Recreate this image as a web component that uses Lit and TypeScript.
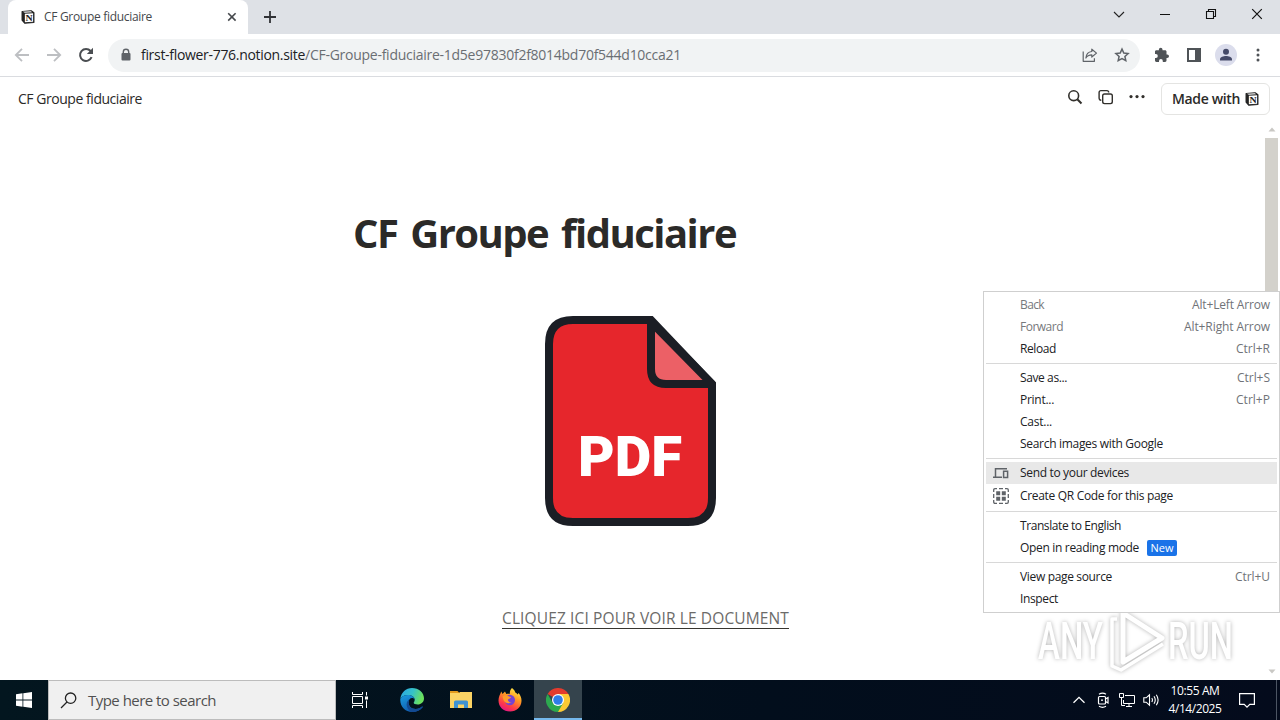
import { LitElement, html, css, nothing } from 'lit';
import { customElement, property } from 'lit/decorators.js';
import { classMap } from 'lit/directives/class-map.js';

interface MenuItem {
  label: string;
  width: number;
  keys?: string;
  keysWidth?: number;
  disabled?: boolean;
  active?: boolean;
  icon?: 'devices' | 'qr';
  badge?: string;
}

const MENU: MenuItem[][] = [
  [
    { label: 'Back', width: 24, keys: 'Alt+Left Arrow', keysWidth: 78, disabled: true },
    { label: 'Forward', width: 43, keys: 'Alt+Right Arrow', keysWidth: 86, disabled: true },
    { label: 'Reload', width: 36, keys: 'Ctrl+R', keysWidth: 34 },
  ],
  [
    { label: 'Save as...', width: 47, keys: 'Ctrl+S', keysWidth: 33 },
    { label: 'Print...', width: 34, keys: 'Ctrl+P', keysWidth: 34 },
    { label: 'Cast...', width: 32 },
    { label: 'Search images with Google', width: 143 },
  ],
  [
    { label: 'Send to your devices', width: 109, icon: 'devices', active: true },
    { label: 'Create QR Code for this page', width: 153, icon: 'qr' },
  ],
  [
    { label: 'Translate to English', width: 101 },
    { label: 'Open in reading mode', width: 119, badge: 'New' },
  ],
  [
    { label: 'View page source', width: 92, keys: 'Ctrl+U', keysWidth: 35 },
    { label: 'Inspect', width: 38 },
  ],
];

const notionIcon = (size: number) => html`
  <svg width=${size} height=${size} viewBox="0 0 16 16">
    <path d="M1.2 1.6 11.6.9l3.2 2.3v11L4.2 15.1 1.2 11.6z" fill="#222" stroke="#222" stroke-width="1.2" stroke-linejoin="round" />
    <path d="M4.4 4.3 13.8 3.7v9.7l-9.4.7z" fill="#fff" />
    <path d="M2.2 2.1 11.2 1.5l1.6 1.2-8.4.5z" fill="#fff" />
    <text x="5" y="12.6" textLength="8.2" lengthAdjust="spacingAndGlyphs" font-family="Liberation Serif, serif" font-weight="700" font-size="10.5" fill="#222">N</text>
  </svg>
`;

// Line of text whose tracking is adjusted to fill the given width
@customElement('fit-text')
class FitText extends LitElement {
  @property({ type: Number }) width = 0;
  @property() text = '';

  static styles = css`
    :host {
      display: inline-block;
      white-space: pre;
      flex: none;
    }
  `;

  updated() {
    const span = this.renderRoot.querySelector('span')!;
    span.style.letterSpacing = '0px';
    const natural = span.getBoundingClientRect().width;
    span.style.letterSpacing = `${(this.width - natural) / this.text.length}px`;
  }

  render() {
    return html`<span>${this.text}</span>`;
  }
}

@customElement('context-menu')
class ContextMenu extends LitElement {
  static styles = css`
    :host {
      display: block;
      box-sizing: border-box;
      width: 297px;
      height: 322px;
      padding: 2px;
      background: #fff;
      border: 1px solid #cfcfcf;
      font-size: 12px;
      color: #202124;
    }
    .group + .group {
      border-top: 1px solid #d8d8d8;
      margin-top: 3px;
      padding-top: 3px;
    }
    .item {
      display: flex;
      align-items: center;
      height: 22px;
      padding: 0 7px 0 34px;
    }
    .item fit-text {
      padding-bottom: 2px;
    }
    .item.qr {
      height: 24px;
    }
    .item.active {
      background: #e8e8e8;
    }
    .disabled {
      color: #77797c;
    }
    .keys {
      margin-left: auto;
      color: #707378;
    }
    svg {
      width: 16px;
      height: 16px;
      margin: 0 11px 0 -27px;
    }
    .badge {
      display: flex;
      align-items: center;
      justify-content: center;
      width: 30px;
      height: 16px;
      margin-left: 8px;
      border-radius: 2px;
      background: #1a73e8;
      color: #fff;
      font-size: 11px;
    }
    .badge fit-text {
      padding-bottom: 1px;
    }
  `;

  _icon(name: string) {
    return name === 'devices'
      ? html`<svg viewBox="0 0 16 16" fill="none" stroke="#5f6368" stroke-width="1.5">
          <path d="M2.5 12V3.8H14M0 12.3h9M10.6 6.2h4v6.3h-4z" />
        </svg>`
      : html`<svg viewBox="0 0 16 16" fill="#5f6368">
          <path d="M.7 4V2Q.7.7 2 .7h2M12 .7h2Q15.3.7 15.3 2v2M15.3 12v2q0 1.3-1.3 1.3h-2M4 15.3H2Q.7 15.3.7 14v-2M.7 6v4M15.3 6v4M6 .7h4M6 15.3h4" fill="none" stroke="#5f6368" stroke-width="1.3" />
          <path d="M3.2 3.2h4v4h-4zM8.8 3.2h4v4h-4zM3.2 8.8h4v4h-4zM8.8 8.8h4v4h-4z" />
        </svg>`;
  }

  render() {
    return html`${MENU.map(group => html`
      <div class="group">
        ${group.map(item => html`
          <div class=${classMap({ item: true, active: !!item.active, disabled: !!item.disabled, qr: item.icon === 'qr' })}>
            ${item.icon ? this._icon(item.icon) : nothing}
            <fit-text .width=${item.width} .text=${item.label}></fit-text>
            ${item.badge ? html`<span class="badge"><fit-text .width=${23} .text=${item.badge}></fit-text></span>` : nothing}
            ${item.keys ? html`<fit-text class="keys" .width=${item.keysWidth!} .text=${item.keys}></fit-text>` : nothing}
          </div>
        `)}
      </div>
    `)}`;
  }
}

@customElement('browser-chrome')
class BrowserChrome extends LitElement {
  static styles = css`
    :host {
      display: block;
      height: 77px;
      box-sizing: border-box;
      border-bottom: 1px solid #dadce0;
      background: #fff;
    }
    svg {
      display: block;
      flex: none;
    }
    .tabs {
      display: flex;
      height: 34px;
      background: #dee1e6;
      padding-left: 8px;
    }
    .tab {
      box-sizing: border-box;
      width: 240px;
      display: flex;
      align-items: center;
      padding: 0 11px 0 13px;
      background: #fff;
      border-radius: 8px 8px 0 0;
      font-size: 12px;
      color: #45484c;
    }
    .tab fit-text {
      margin: 0 auto 0 9px;
      padding-bottom: 2px;
    }
    .plus {
      margin: 10px 0 0 15px;
    }
    .window {
      display: flex;
      align-items: center;
      gap: 34px;
      margin: 0 17px 6px auto;
    }
    .toolbar {
      display: flex;
      align-items: center;
      height: 42px;
      padding: 0 14px;
    }
    .nav {
      display: flex;
      gap: 16px;
      margin-right: 14px;
    }
    .omnibox {
      box-sizing: border-box;
      display: flex;
      align-items: center;
      width: 1032px;
      height: 33px;
      padding: 0 10px 0 12px;
      border-radius: 17px;
      background: #f1f3f4;
      font-size: 14px;
      color: #202124;
    }
    .omnibox fit-text {
      padding-bottom: 2px;
    }
    .omnibox .host {
      margin-left: 9px;
    }
    .path {
      color: #6a6e73;
      margin-right: auto;
    }
    .actions {
      display: flex;
      gap: 16px;
    }
    .ext {
      display: flex;
      align-items: center;
      gap: 16px;
      margin-left: 14px;
    }
    .avatar {
      width: 22px;
      height: 22px;
      margin: 0 -3px;
    }
  `;

  render() {
    return html`
      <div class="tabs">
        <div class="tab">
          ${notionIcon(14)}
          <fit-text .width=${108} .text=${'CF Groupe fiduciaire'}></fit-text>
          <svg width="10" height="10" viewBox="0 0 10 10" stroke="#45484c" stroke-width="1.6"><path d="M1.2 1.2l7.4 7.4M8.6 1.2 1.2 8.6" /></svg>
        </div>
        <svg class="plus" width="14" height="14" viewBox="0 0 14 14" stroke="#303236" stroke-width="1.8"><path d="M7 1v12M1 7h12" /></svg>
        <div class="window">
          <svg width="12" height="12" viewBox="0 0 12 12" fill="none" stroke="#222" stroke-width="1.1"><path d="M1 4l5 5 5-5" /></svg>
          <svg width="12" height="12" viewBox="0 0 12 12" fill="none" stroke="#111"><path d="M1 6.5h10" /></svg>
          <svg width="12" height="12" viewBox="0 0 12 12" fill="none" stroke="#111" stroke-width="1.1"><path d="M1.5 3.5h7v7h-7zM3.5 3.5v-2h7v7h-2" /></svg>
          <svg width="12" height="12" viewBox="0 0 12 12" fill="none" stroke="#111" stroke-width="1.2"><path d="M1.2 1.2l9.6 9.6M10.8 1.2l-9.6 9.6" /></svg>
        </div>
      </div>
      <div class="toolbar">
        <div class="nav">
          <svg width="16" height="16" viewBox="0 0 16 16" fill="none" stroke="#bdbfc2" stroke-width="1.8"><path d="M15 8H2M8 1.8 1.8 8 8 14.2" /></svg>
          <svg width="16" height="16" viewBox="0 0 16 16" fill="none" stroke="#bdbfc2" stroke-width="1.8"><path d="M1 8h13M8 1.8 14.2 8 8 14.2" /></svg>
          <svg width="16" height="16" viewBox="0 0 16 16"><path d="M13.6 10.2A6 6 0 1 1 12.6 4L13.6 5" fill="none" stroke="#4a4d51" stroke-width="2" /><path d="M15 .8v6.2H8.8z" fill="#4a4d51" /></svg>
        </div>
        <div class="omnibox">
          <svg width="12" height="14" viewBox="0 0 12 14"><path d="M3.3 6V4a2.7 2.7 0 0 1 5.4 0v2" fill="none" stroke="#5f6368" stroke-width="1.4" /><rect x="1.5" y="5" width="9" height="7.6" rx="1" fill="#5f6368" /></svg>
          <fit-text class="host" .width=${164} .text=${'first-flower-776.notion.site'}></fit-text>
          <fit-text class="path" .width=${376} .text=${'/CF-Groupe-fiduciaire-1d5e97830f2f8014bd70f544d10cca21'}></fit-text>
          <div class="actions">
            <svg width="16" height="16" viewBox="0 0 16 16" fill="none" stroke="#5f6368" stroke-width="1.2"><path d="M1.2 4.5v9.8h11.2v-3M9.8 2.2l4.7 3.9-4.7 3.9V7.8C7 7.8 5 8.8 3.9 11 4.2 7.4 6 4.9 9.8 4.5z" stroke-linejoin="round" /></svg>
            <svg width="16" height="16" viewBox="0 0 16 16" fill="none" stroke="#5f6368" stroke-width="1.5"><path d="M8 2.1l1.8 3.9 4.3.5-3.2 2.9.9 4.2L8 11.5l-3.8 2.1.9-4.2L1.9 6.5l4.3-.5z" /></svg>
          </div>
        </div>
        <div class="ext">
          <svg width="16" height="16" viewBox="0 0 16 16" fill="#4f5357"><path d="M13.2 7.4h-.7V4.6c0-.8-.6-1.4-1.4-1.4H8.5v-.6a1.8 1.8 0 0 0-3.6 0v.6H2.4C1.6 3.2 1 3.8 1 4.6v2.5h.9a1.9 1.9 0 0 1 0 3.8H1v2.6c0 .8.6 1.4 1.4 1.4H5V14a1.9 1.9 0 0 1 3.8 0v.9h2.3c.8 0 1.4-.6 1.4-1.4V11h.7a1.8 1.8 0 0 0 0-3.6z" /></svg>
          <svg width="16" height="16" viewBox="0 0 16 16"><path d="M1 1h14v14H1zM3 3v10h6V3z" fill="#4f5357" fill-rule="evenodd" /></svg>
          <svg class="avatar" viewBox="0 0 22 22"><circle cx="11" cy="11" r="11" fill="#dbddec" /><circle cx="11" cy="7.8" r="3" fill="#454a68" /><path d="M5 16.5v-1.2c0-2 3.5-3.2 6-3.2s6 1.2 6 3.2v1.2z" fill="#454a68" /></svg>
          <svg width="16" height="16" viewBox="0 0 16 16" fill="#4f5357"><circle cx="8" cy="3" r="1.5" /><circle cx="8" cy="8" r="1.5" /><circle cx="8" cy="13" r="1.5" /></svg>
        </div>
      </div>
    `;
  }
}

@customElement('notion-page')
class NotionPage extends LitElement {
  static styles = css`
    :host {
      display: block;
      height: 603px;
      position: relative;
      overflow: hidden;
      background: #fff;
      color: #2b2a28;
    }
    svg {
      display: block;
      flex: none;
    }
    header {
      box-sizing: border-box;
      display: flex;
      align-items: center;
      height: 44px;
      padding: 0 10px 0 18px;
      font-size: 14px;
    }
    header fit-text {
      padding-bottom: 2px;
    }
    .tools {
      display: flex;
      gap: 15px;
      margin: 0 16px 4px auto;
    }
    .made {
      box-sizing: border-box;
      display: flex;
      align-items: center;
      gap: 5px;
      width: 109px;
      height: 32px;
      padding-left: 10px;
      border: 1px solid #e4e4e2;
      border-radius: 6px;
      font-weight: 600;
    }
    .body {
      display: flex;
      height: 559px;
    }
    main {
      flex: 1;
      padding: 82px 0 0 353px;
    }
    h1 {
      margin: 0;
      font-size: 40px;
      line-height: 60px;
      font-weight: 700;
      word-spacing: 4px;
    }
    .pdf {
      margin: 52px 0 0 191px;
    }
    .link {
      display: inline-block;
      margin: 81px 0 0 149px;
      height: 20px;
      line-height: 20px;
      border-bottom: 1px solid #37352f;
      font-size: 15.5px;
      font-weight: 500;
      color: #6c6b69;
    }
    .scroll {
      display: flex;
      flex-direction: column;
      align-items: center;
      width: 17px;
      padding: 6px 0;
      box-sizing: border-box;
    }
    .thumb {
      width: 13px;
      height: 400px;
      margin: 6px 0 auto;
      background: #d3d1cb;
    }
    .watermark {
      position: absolute;
      left: 1034px;
      top: 528px;
      overflow: visible;
      filter: drop-shadow(0 0 2px rgba(0, 0, 0, 0.3));
    }
    context-menu {
      position: absolute;
      left: 983px;
      top: 214px;
    }
  `;

  render() {
    return html`
      <header>
        <fit-text .width=${124} .text=${'CF Groupe fiduciaire'}></fit-text>
        <div class="tools">
          <svg width="16" height="16" viewBox="0 0 16 16" fill="none" stroke="#32302c" stroke-width="1.6"><circle cx="6.7" cy="6.7" r="4.9" /><path d="M10.3 10.3l4.2 4.2" stroke-width="2" /></svg>
          <svg width="16" height="16" viewBox="0 0 16 16" fill="none" stroke="#32302c" stroke-width="1.4"><rect x="4.7" y="5" width="9.6" height="9.6" rx="1.8" /><path d="M3.3 11.2h-.4A1.9 1.9 0 0 1 1.1 9.3V3.5c0-1 .8-1.9 1.8-1.9h6c1 0 1.8.8 1.8 1.8" /></svg>
          <svg width="16" height="16" viewBox="0 0 16 16" fill="#32302c"><circle cx="2" cy="7.6" r="1.6" /><circle cx="8" cy="7.6" r="1.6" /><circle cx="14" cy="7.6" r="1.6" /></svg>
        </div>
        <div class="made"><fit-text .width=${68} .text=${'Made with'}></fit-text>${notionIcon(14)}</div>
      </header>
      <div class="body">
        <main>
          <h1><fit-text .width=${383} .text=${'CF Groupe fiduciaire'}></fit-text></h1>
          <svg class="pdf" width="172" height="212" viewBox="0 0 172 212">
            <path d="M29 5h78L168 69v114q0 24-24 24H29q-24 0-24-24V29Q5 5 29 5z" fill="#e6262c" stroke="#1b1e25" stroke-width="8" />
            <path d="M107 7v47q0 15 15 15h46z" fill="#ec6066" stroke="#1b1e25" stroke-width="8" stroke-linejoin="round" />
            <text x="34" y="161" textLength="104" lengthAdjust="spacingAndGlyphs" font-family="Roboto, sans-serif" font-weight="900" font-size="56" fill="#fff">PDF</text>
          </svg>
          <div class="link"><fit-text .width=${287} .text=${'CLIQUEZ ICI POUR VOIR LE DOCUMENT'}></fit-text></div>
        </main>
        <div class="scroll">
          <svg width="8" height="5" viewBox="0 0 8 5"><path d="M.5 4.5 4 .5l3.5 4z" fill="#c9c8c4" /></svg>
          <div class="thumb"></div>
          <svg width="8" height="5" viewBox="0 0 8 5"><path d="M.5.5 4 4.5 7.5.5z" fill="#c9c8c4" /></svg>
        </div>
      </div>
      <svg class="watermark" width="210" height="74" viewBox="0 0 210 74" fill="#fff">
        <g font-family="Roboto, sans-serif" font-weight="500" font-size="51">
          <text x="4" y="54" textLength="65" lengthAdjust="spacingAndGlyphs">ANY</text>
          <text x="134" y="54" textLength="65" lengthAdjust="spacingAndGlyphs">RUN</text>
        </g>
        <g fill="none" stroke="#fff" stroke-linejoin="round">
          <path d="M89 8 128 33 89 57z" stroke-width="5" />
          <path d="M83 14h-5v47l9 4 42-26" stroke-width="3.5" />
        </g>
      </svg>
      <context-menu></context-menu>
    `;
  }
}

@customElement('task-bar')
class TaskBar extends LitElement {
  static styles = css`
    :host {
      display: flex;
      height: 40px;
      background: linear-gradient(90deg, #03161f, #020e1c 60%, #040b1c);
      color: #fff;
    }
    svg {
      display: block;
      flex: none;
    }
    .start {
      width: 48px;
      display: grid;
      place-items: center;
    }
    .search {
      box-sizing: border-box;
      display: flex;
      align-items: center;
      gap: 11px;
      width: 288px;
      padding-left: 11px;
      border: 1px solid #bcbcbc;
      background: #f0f0f0;
      font-size: 15px;
      color: #505050;
    }
    .app {
      box-sizing: border-box;
      width: 49px;
      display: grid;
      place-items: center;
    }
    .app.tasks {
      width: 48px;
      margin-right: 3px;
    }
    .app.current {
      width: 48px;
      background: #35444d;
      border-bottom: 2px solid #76b9ed;
      padding-top: 2px;
    }
    .tray {
      display: flex;
      align-items: center;
      gap: 8px;
      margin-left: auto;
    }
    .clock {
      display: flex;
      flex-direction: column;
      align-items: center;
      width: 54px;
      font-size: 12px;
      line-height: 18px;
    }
    .note {
      margin: 0 12px 0 8px;
    }
    .peek {
      width: 4px;
      height: 40px;
      box-sizing: border-box;
      border-left: 1px solid #4c5563;
    }
  `;

  render() {
    return html`
      <div class="start">
        <svg width="16" height="16" viewBox="0 0 16 16" fill="#fff"><path d="M0 2.2 6.5 1.3v6.3H0zM7.3 1.2 16 0v7.6H7.3zM0 8.4h6.5v6.3L0 13.8zM7.3 8.4H16V16l-8.7-1.2z" /></svg>
      </div>
      <div class="search">
        <svg width="17" height="17" viewBox="0 0 17 17" fill="none" stroke="#222" stroke-width="1.3"><circle cx="10.6" cy="6.2" r="5.2" /><path d="M7 10l-6 6" /></svg>
        <fit-text .width=${128} .text=${'Type here to search'}></fit-text>
      </div>
      <div class="app tasks">
        <svg width="16" height="16" viewBox="0 0 16 16" fill="none" stroke="#fff"><path d="M.5 0v2.5h10V0M.5 4.5h10v7H.5zM.5 16v-2.5h10V16M14.5 0v3.500M14.5 8.5V16" /><path d="M13 4.5h3v3h-3z" fill="#fff" stroke="none" /></svg>
      </div>
      <div class="app">
        <svg width="24" height="24" viewBox="0 0 24 24">
          <defs>
            <linearGradient id="sea" x1="0" y1="0" x2="1" y2=".3"><stop offset="0" stop-color="#2aa6e6" /><stop offset=".55" stop-color="#35c1c9" /><stop offset="1" stop-color="#6be05d" /></linearGradient>
            <linearGradient id="deep" x1="0" y1="0" x2=".6" y2="1"><stop offset="0" stop-color="#1a9de0" /><stop offset="1" stop-color="#0f55a8" /></linearGradient>
          </defs>
          <path d="M.3 11C1 4.5 6 0 12 0c6.8 0 12 4.8 12 10.2 0 3.9-3 6.3-6.3 6.3-2.4 0-4-.8-4-1.7 0-.8 1-1.2 1-3C14.7 9 11.5 7 8 7 4 7 1.3 8.7.3 11z" fill="url(#sea)" />
          <path d="M.3 11C1.3 8.7 4 7 8 7c3.5 0 6.5 2 6.7 4.5-.4-1-1.5-1.5-2.6-1.5-2 0-3.6 2-3.6 4.6 0 3.7 3.2 6.5 7 6.5 3 0 4.9-1 6.6-2.5.4-.2.8.2.5.6C20.5 22.2 16.5 24 12 24 5 24-.2 18 .3 11z" fill="url(#deep)" />
          <path d="M8.5 14.6c0-1.5.5-2.8 1.3-3.6-3.8 2-5 8.5 1 12.9 4.5.5 9.3-1 11.8-4.7.2-.4-.2-.8-.6-.6-1.6 1.5-3.6 2.5-6.5 2.5-3.8 0-7-2.8-7-6.5z" fill="#134a92" />
        </svg>
      </div>
      <div class="app">
        <svg width="22" height="20" viewBox="0 0 22 20">
          <path d="M0 1h7.5l2 2H0z" fill="#e39a1c" />
          <path d="M0 3h9l1-1h12v16H0z" fill="#fbd364" />
          <path d="M4 18v-6q0-1.5 1.5-1.5h11Q18 10.5 18 12v6h-4v-3.5H8V18z" fill="#3f92d2" />
        </svg>
      </div>
      <div class="app">
        <svg width="24" height="24" viewBox="0 0 24 24">
          <defs>
            <linearGradient id="fire" x1=".8" y1="0" x2=".3" y2="1"><stop offset="0" stop-color="#fff04a" /><stop offset=".4" stop-color="#ff9a24" /><stop offset=".75" stop-color="#ff3b47" /><stop offset="1" stop-color="#e31587" /></linearGradient>
          </defs>
          <path d="M14 0c2 1.5 3 3 3.3 4.5 1 .3 1.7 1 2.3 2l1-1.5c2 2.5 3 5 2.9 8C23.3 19 18.5 23.5 12 23.5S.5 19 .5 12.5C.5 9 2 6.5 3.3 3.5L4.5 6 7 3.6 8.3 6c1.5-.4 2.6-.3 3.5 0C11.6 3.5 12.5 1.5 14 0z" fill="url(#fire)" />
          <circle cx="11.8" cy="12" r="5.2" fill="#7542d4" />
          <path d="M4.5 8.5C7 6.5 9 7 11 8.5l2 .5c-.5 1.5-2 1.500-3 2.5-.5 2 1.5 3 3.5 2.5-3 2.5-7 1-8-2z" fill="#ff9b2b" />
        </svg>
      </div>
      <div class="app current">
        <svg width="24" height="24" viewBox="0 0 24 24">
          <path d="M12 12 1.6 6A12 12 0 0 1 22.4 6z" fill="#e33b2e" />
          <path d="M12 12V6h10.4A12 12 0 0 1 12 24z" fill="#fcc934" />
          <path d="M12 24A12 12 0 0 1 1.6 6L6.8 15 12 12l5.2 3z" fill="#2da94f" />
          <circle cx="12" cy="12" r="6" fill="#fff" />
          <circle cx="12" cy="12" r="4.8" fill="#2f7de9" />
        </svg>
      </div>
      <div class="tray">
        <svg width="16" height="16" viewBox="0 0 16 16" fill="none" stroke="#fff" stroke-width="1.3"><path d="M2.5 10.8 8 5.3l5.5 5.5" /></svg>
        <svg width="16" height="16" viewBox="0 0 16 16" fill="none" stroke="#fff" stroke-width="1.2"><rect x="3.5" y="4.5" width="7" height="7.5" rx="1" /><path d="M10.5 7l2.5-1.5v5.5l-2.5-1.5M4 2.2q3.5-2 7 0M4 14.3q3.5 2 7 0" /><circle cx="7" cy="8.2" r=".9" fill="#fff" stroke="none" /></svg>
        <svg width="16" height="16" viewBox="0 0 16 16" fill="none" stroke="#fff"><path d="M6 3.5h9.5v8H4.5V8M10 11.5v3M7 14.5h6M.5 1.5h4v4h-4zM2.5 5.5v8H6" /></svg>
        <svg width="17" height="16" viewBox="0 0 17 16" fill="none" stroke="#fff" stroke-width="1.1"><path d="M.8 5.8h2.4L6.5 2.8v10.4L3.2 10.2H.8zM8.8 6q1.3 2 0 4M11 4.3q2.5 3.7 0 7.4M13.3 2.700q3.6 5.3 0 10.6" /></svg>
        <div class="clock">
          <fit-text .width=${49} .text=${'10:55 AM'}></fit-text>
          <fit-text .width=${53} .text=${'4/14/2025'}></fit-text>
        </div>
        <svg class="note" width="18" height="18" viewBox="0 0 18 18" fill="none" stroke="#fff" stroke-width="1.2"><path d="M1.6 2.6h14.800v10.8h-4.6L9 16.2l-2.8-2.8H1.6z" /></svg>
        <div class="peek"></div>
      </div>
    `;
  }
}

@customElement('app-root')
class AppRoot extends LitElement {
  static styles = css`
    :host {
      display: block;
      width: 1280px;
      height: 720px;
      overflow: hidden;
      font-family: "Open Sans", "Noto Sans", sans-serif;
    }
  `;

  render() {
    return html`
      <browser-chrome></browser-chrome>
      <notion-page></notion-page>
      <task-bar></task-bar>
    `;
  }
}
